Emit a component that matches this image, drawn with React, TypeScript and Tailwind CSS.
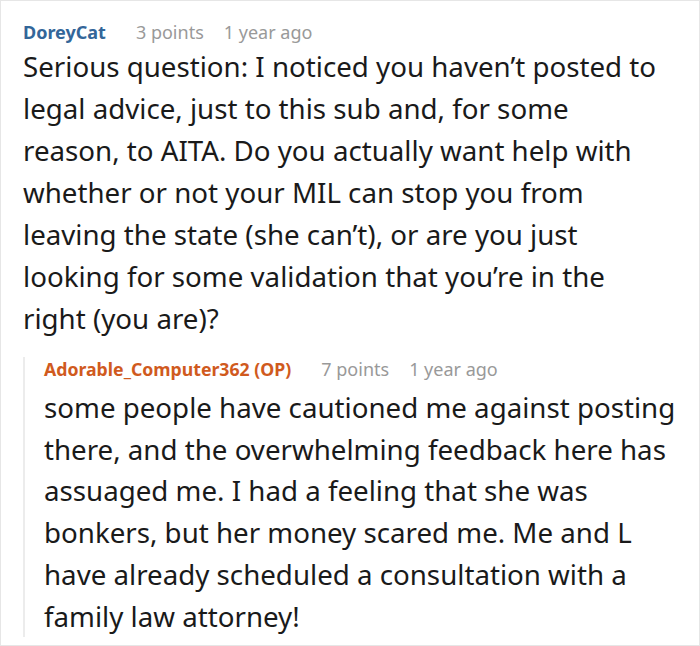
import React from "react";

function Meta({ name, color, points, nameSize }: { name: string; color: string; points: string; nameSize: string }) {
  return (
    <div className="flex items-center gap-[30px] text-[18px] leading-[24px]">
      <span className={`font-bold ${color} ${nameSize}`}>{name}</span>
      <span className="text-[#999999]">{points}</span>
      <span className="text-[#999999] -ml-[10px]">1 year ago</span>
    </div>
  );
}

export default function App() {
  return (
    <div
      className="w-[700px] h-[646px] bg-white border border-[#e6e6e6] overflow-hidden"
      style={{ fontFamily: '"Noto Sans", "Open Sans", sans-serif' }}
    >
      <div className="pl-[22px] pr-3 pt-[19px]">
        <Meta name="DoreyCat" color="text-[#336699]" points="3 points" nameSize="text-[18px]" />
        <p className="mt-[1px] pr-[30px] text-[27.7px] leading-[42px] text-[#1a1a1a]">
          Serious question: I noticed you haven’t posted to legal advice, just to this sub and, for some
          reason, to AITA. Do you actually want help with whether or not your MIL can stop you from
          leaving the state (she can’t), or are you just looking for some validation that you’re in the
          right (you are)?
        </p>

        <div className="mt-[18px] border-l-2 border-[#ececec] pl-[19px]">
          <Meta name="Adorable_Computer362 (OP)" color="text-[#d05a1e]" points="7 points" nameSize="text-[17.7px]" />
          <p className="mt-[6px] text-[27.7px] leading-[41.7px] text-[#1a1a1a]">
            some people have cautioned me against posting there, and the overwhelming feedback here has
            assuaged me. I had a feeling that she was bonkers, but her money scared me. Me and L have
            already scheduled a consultation with a family law attorney!
          </p>
        </div>
      </div>
    </div>
  );
}
